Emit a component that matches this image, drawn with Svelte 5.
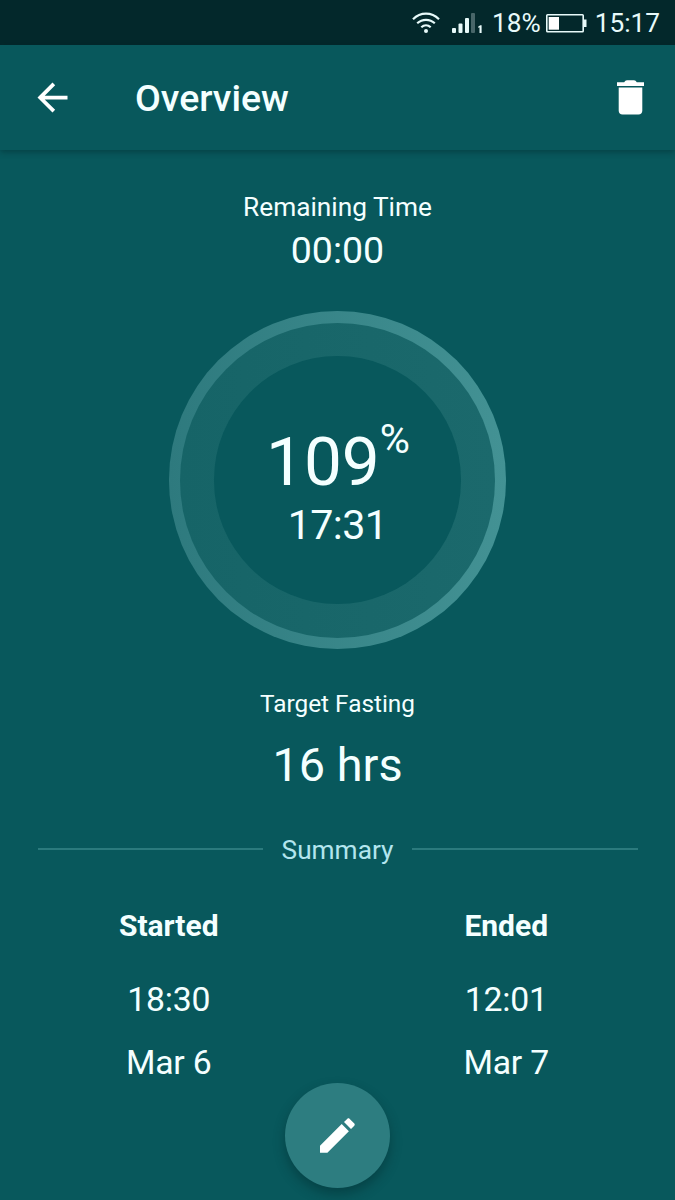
<script>
    let percent = 109
    let elapsed = '17:31'
    let remaining = '00:00'
    let target = 16

    let summary = [
        {
            id:1,
            title:'Started',
            time:'18:30',
            date:'Mar 6'
        },
        {
            id:2,
            title:'Ended',
            time:'12:01',
            date:'Mar 7'
        }
    ]
</script>

<div class="screen">
    <div class="status">
        <svg class="wifi" width="28" height="22" viewBox="0 0 28 22" fill="none" stroke="#e8fafa" stroke-width="2.2">
            <path d="M1 7.2C8.5-.3 19.5-.3 27 7.2"/>
            <path d="M5.2 11.3c5-4.7 12.6-4.7 17.6 0"/>
            <path d="M9.3 15.3c2.8-2.5 6.6-2.5 9.4 0"/>
            <circle cx="14" cy="19" r="2" fill="#e8fafa" stroke="none"/>
        </svg>
        <svg class="signal" width="31" height="20" viewBox="0 0 31 20" fill="#e8fafa">
            <rect x="0" y="15" width="4" height="5" rx="1"/>
            <rect x="6.5" y="10.5" width="4" height="9.5" rx="1"/>
            <rect x="13" y="5" width="4" height="15" rx="1"/>
            <rect x="19" y="0" width="4" height="20" rx="1" opacity=".3"/>
            <path d="M26.3 13.5l2-1.2h1.3V20h-2.1v-5.7l-1.2.6z"/>
        </svg>
        <span class="battery-text">18%</span>
        <svg class="battery" width="41" height="19" viewBox="0 0 41 19">
            <rect x=".8" y=".8" width="36.4" height="17" rx=".8" fill="none" stroke="#e8fafa" stroke-width="1.6"/>
            <rect x="2.7" y="3" width="10.3" height="12.7" fill="#fff"/>
            <rect x="38" y="5.5" width="2.5" height="7.5" fill="#e8fafa"/>
        </svg>
        <span>15:17</span>
    </div>

    <header class="bar">
        <svg width="45" height="45" viewBox="0 0 24 24" fill="#fff">
            <path d="M20 11H7.83l5.59-5.59L12 4l-8 8 8 8 1.41-1.41L7.83 13H20v-2z"/>
        </svg>
        <h1>Overview</h1>
        <svg width="27" height="35" viewBox="0 0 27 35" fill="#fff">
            <path d="M0 2.2h7.2C8 .9 8.7.2 10 .2h7c1.3 0 2 .7 2.8 2H27v3.9H0zM1.7 7.5h23.6v23.2c0 2.3-1.5 3.8-3.8 3.8h-16c-2.3 0-3.8-1.5-3.8-3.8z"/>
        </svg>
    </header>

    <main>
        <div class="label">Remaining Time</div>
        <div class="remaining">{remaining}</div>

        <div class="ring">
            <div class="track">
                <div class="inner">
                    <div class="percent">{percent}<span class="sign">%</span></div>
                    <div class="elapsed">{elapsed}</div>
                </div>
            </div>
        </div>

        <div class="target-label">Target Fasting</div>
        <div class="target">{target} hrs</div>

        <div class="divider"><span>Summary</span></div>

        <div class="summary">
            {#each summary as item }
            <div class="column">
                <div class="title">{item.title}</div>
                <div class="time">{item.time}</div>
                <div class="date">{item.date}</div>
            </div>
            {/each}
        </div>
    </main>

    <!--edit button floats over the page-->
    <button class="fab" aria-label="Edit">
        <svg width="35" height="35" viewBox="0 0 35 35" fill="#fff">
            <path d="M0 27.8L21.7 6.1l7.2 7.2L7.4 34.8H0zM24 4.1L27.4.8c.6-.6 1.5-.6 2.1 0L34.3 5.600c.6.6.6 1.5 0 2.1L31 11.100z"/>
        </svg>
    </button>
</div>

<style>
    :global(body) {
        margin: 0;
        background: #08585c;
    }
    .screen {
        position: relative;
        width: 675px;
        height: 1200px;
        overflow: hidden;
        background: #08585c;
        color: #f4ffff;
        font-family: Roboto, "Liberation Sans", sans-serif;
    }
    .status {
        display: flex;
        align-items: center;
        justify-content: flex-end;
        box-sizing: border-box;
        height: 45px;
        padding: 1px 15px 0 0;
        background: #03282b;
        color: #e8fafa;
        font-size: 26.25px;
    }
    .wifi {
        margin-right: 12px;
    }
    .signal {
        margin-right: 9px;
    }
    .battery {
        margin: 0 8px 0 5px;
    }
    .bar {
        display: flex;
        align-items: center;
        box-sizing: border-box;
        height: 105px;
        padding: 0 31.5px 0 30px;
        box-shadow: 0 2px 6px rgba(0, 30, 34, .4);
    }
    h1 {
        flex: 1;
        margin: 1px 0 0 60px;
        font-size: 37.5px;
        font-weight: 500;
        line-height: 44px;
    }
    main {
        display: flex;
        flex-direction: column;
        align-items: center;
        padding-top: 41px;
    }
    .label {
        font-size: 26.25px;
        line-height: 32px;
    }
    .remaining {
        margin: 5px 0 39.25px;
        font-size: 37.5px;
        line-height: 44px;
    }
    .ring {
        box-sizing: border-box;
        width: 337.5px;
        height: 337.5px;
        padding: 11.25px;
        border-radius: 50%;
        background: linear-gradient(90deg, #2e7a7e, #439294);
    }
    .track {
        box-sizing: border-box;
        height: 100%;
        padding: 33.75px;
        border-radius: 50%;
        background: linear-gradient(90deg, #166467, #1b696c);
    }
    .inner {
        display: flex;
        flex-direction: column;
        align-items: center;
        box-sizing: border-box;
        height: 100%;
        padding-top: 67.5px;
        border-radius: 50%;
        background: #08585c;
    }
    .percent {
        display: flex;
        margin-left: 1px;
        font-size: 67.5px;
        line-height: 76px;
    }
    .sign {
        margin-top: -7px;
        font-size: 41.25px;
        line-height: 44px;
    }
    .elapsed {
        margin-top: 3px;
        font-size: 41.25px;
        letter-spacing: -.6px;
        line-height: 44px;
    }
    .target-label {
        margin-top: 40px;
        font-size: 24.375px;
        line-height: 30px;
    }
    .target {
        margin-top: 18px;
        font-size: 46.875px;
        line-height: 56px;
    }
    .divider {
        display: flex;
        align-items: center;
        align-self: stretch;
        gap: 19px;
        margin: 41px 37.5px 0;
        color: #b3e5ee;
        font-size: 26.25px;
        line-height: 32px;
    }
    .divider::before,
    .divider::after {
        content: "";
        flex: 1;
        height: 2px;
        margin-bottom: 2px;
        background: #2b7a7d;
    }
    .summary {
        display: flex;
        align-self: stretch;
        margin-top: 42px;
        text-align: center;
    }
    .column {
        flex: 1;
    }
    .title {
        font-size: 30px;
        font-weight: 700;
        line-height: 36px;
    }
    .time,
    .date {
        font-size: 33.75px;
        letter-spacing: -.2px;
        line-height: 40px;
    }
    .time {
        margin: 36px 0 23px;
    }
    .fab {
        position: absolute;
        left: 285px;
        bottom: 12px;
        display: flex;
        align-items: center;
        justify-content: center;
        width: 105px;
        height: 105px;
        padding: 0;
        border: 0;
        border-radius: 50%;
        background: #2d7d80;
        box-shadow: 0 6px 12px rgba(0, 35, 38, .4);
    }
</style>
